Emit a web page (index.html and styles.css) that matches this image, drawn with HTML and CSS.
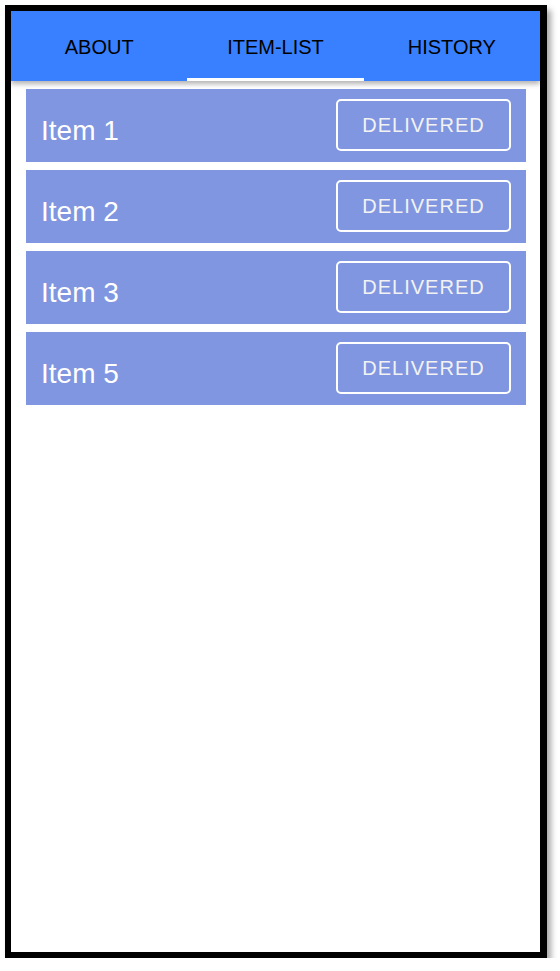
FILE: index.html
```html
<!DOCTYPE html>
<html>
<head>
<meta charset="utf-8">
<link rel="stylesheet" href="styles.css">
</head>
<body>
<div class="frame">
  <header class="tabs">
    <div class="tab">ABOUT</div>
    <div class="tab active">ITEM-LIST</div>
    <div class="tab">HISTORY</div>
  </header>
  <main class="list">
    <div class="card"><span class="label">Item 1</span><button class="btn">DELIVERED</button></div>
    <div class="card"><span class="label">Item 2</span><button class="btn">DELIVERED</button></div>
    <div class="card"><span class="label">Item 3</span><button class="btn">DELIVERED</button></div>
    <div class="card"><span class="label">Item 5</span><button class="btn">DELIVERED</button></div>
  </main>
</div>
</body>
</html>
```
FILE: styles.css
```css
html, body {
  margin: 0;
  padding: 0;
  background: #fff;
  font-family: "Liberation Sans", Arial, sans-serif;
}
.frame {
  margin: 5px 0 0 5px;
  width: 529px;
  height: 941px;
  border: 6px solid #000;
  border-right-width: 7px;
  background: #fff;
  box-shadow: 4px 5px 6px rgba(0,0,0,0.35);
  display: flex;
  flex-direction: column;
}
.tabs {
  display: grid;
  grid-template-columns: 1fr 1fr 1fr;
  height: 70px;
  background: #3880ff;
  box-shadow: 0 3px 5px rgba(0,0,0,0.3);
  position: relative;
  z-index: 1;
}
.tab {
  display: flex;
  align-items: center;
  justify-content: center;
  font-size: 20px;
  color: #000;
  box-sizing: border-box;
  padding-top: 2px;
}
.tab.active {
  border-bottom: 3px solid #fff;
  padding-top: 5px;
}
.list {
  display: flex;
  flex-direction: column;
  gap: 8px;
  padding: 8px 14px 0 15px;
}
.card {
  height: 73px;
  background: #8096e0;
  display: flex;
  align-items: center;
  justify-content: space-between;
  padding: 0 15px 0 15px;
  box-sizing: border-box;
}
.label {
  color: #fff;
  font-size: 28px;
  padding-top: 10px;
}
.btn {
  width: 175px;
  height: 52px;
  border: 2px solid #fff;
  border-radius: 5px;
  background: transparent;
  color: #f2f2f2;
  font-family: "Liberation Sans", Arial, sans-serif;
  font-size: 20px;
  letter-spacing: 1px;
  padding: 0;
  margin-top: -1px;
}
```
